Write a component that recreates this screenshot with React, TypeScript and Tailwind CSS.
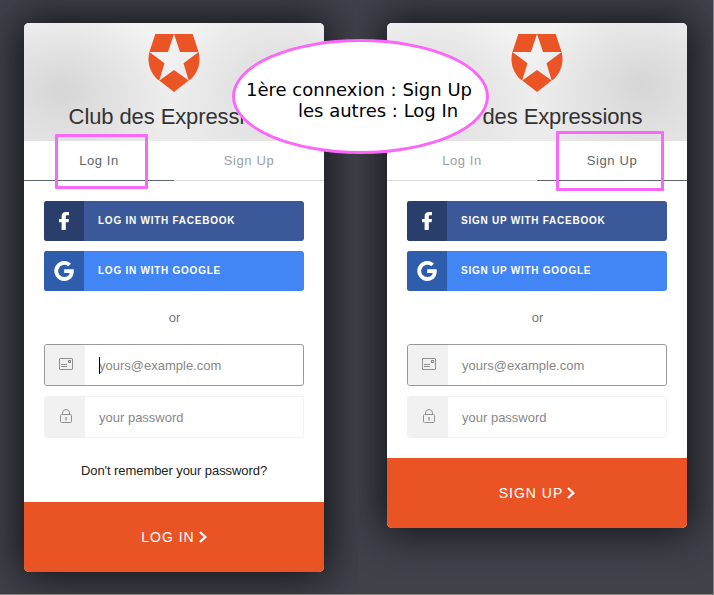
import React from "react";

function BrandLogo() {
  return (
    <svg width="52" height="58" viewBox="0 0 52 58" fill="#eb5424" className="block">
      <path d="M7.300 0H26L20 18H1.400z" />
      <path d="M44.700 0H26L32 18H50.600z" />
      <path d="M1.400 18L16.500 29.200 11.300 46.600C4.500 42-2 31 1.400 18z" />
      <path d="M50.600 18L35.500 29.200 40.700 46.600C47.500 42 54 31 50.600 18z" />
      <path d="M26 36L40.700 46.600 26 58 11.300 46.600z" />
    </svg>
  );
}

function FacebookIcon() {
  return (
    <svg width="10" height="18" viewBox="0 0 10 18" fill="#fff" className="block">
      <path d="M2.600 18V10.200H0V6.900h2.600V4.400C2.600 1.500 4.300 0 7.200 0H10v3.300H8.400C7.100 3.300 6.800 3.800 6.800 4.700v2.200H10l-.4 3.300H6.800V18z" />
    </svg>
  );
}

function GoogleIcon() {
  return (
    <svg width="20" height="20" viewBox="0 0 20 20" fill="#fff" className="block">
      <path d="M10.200 8.200v3.700h5.500c-.4 2.300-2.300 4.200-5.500 4.200A6.100 6.100 0 1 1 14.200 5.300L17 2.600A10 10 0 1 0 10.200 20C16 20 19.800 15.900 19.800 10.100c0-.7-.1-1.300-.2-1.900z" />
    </svg>
  );
}

function MailIcon() {
  return (
    <svg width="14" height="12" viewBox="0 0 14 12" fill="none" stroke="#909090" className="block">
      <rect x=".5" y=".5" width="13" height="11" rx=".5" />
      <path d="M2 6.500h6M2 8.500h6" />
      <rect x="9.500" y="2.500" width="2" height="2" />
    </svg>
  );
}

function LockIcon() {
  return (
    <svg width="12" height="14" viewBox="0 0 12 14" fill="none" stroke="#909090" className="block">
      <rect x=".5" y="5.500" width="11" height="8" rx="1" />
      <path d="M2.500 5.500V4a3.500 3.500 0 0 1 7 0v1.500" />
      <path d="M6 8v3.500" strokeWidth="1.300" />
    </svg>
  );
}

function Tab({ label, active }: { label: string; active: boolean }) {
  return (
    <div
      className={
        "h-10 flex-1 border-b text-center text-[13px] leading-[39px] tracking-[0.6px] " +
        (active ? "border-[#5c666f] text-[#5c666f]" : "border-[#d9dbdd] text-[#9b9fa4]")
      }
    >
      {label}
    </div>
  );
}

function SocialButton({
  label,
  icon,
  iconBg,
  bg,
}: {
  label: string;
  icon: React.ReactNode;
  iconBg: string;
  bg: string;
}) {
  return (
    <div className={"flex h-10 overflow-hidden rounded-[3px] " + bg}>
      <div className={"flex w-10 items-center justify-center " + iconBg}>{icon}</div>
      <div className="pl-[14px] text-[10px] leading-[39px] font-bold tracking-[0.75px] whitespace-nowrap text-white">
        {label}
      </div>
    </div>
  );
}

function Field({
  text,
  icon,
  focused,
  caret,
}: {
  text: string;
  icon: React.ReactNode;
  focused?: boolean;
  caret?: boolean;
}) {
  return (
    <div
      className={
        "flex h-[42px] overflow-hidden rounded-[3px] border " +
        (focused ? "border-[#999]" : "border-[#f1f1f1]")
      }
    >
      <div className="flex w-10 items-center justify-center bg-[#f1f1f1] pb-0.5 pl-0.5">{icon}</div>
      <div className="relative pl-[14px] text-[13px] leading-[41px] text-[#888]">
        {caret && <span className="absolute top-3 left-[14px] h-[17px] w-px bg-black" />}
        {text}
      </div>
    </div>
  );
}

function LockCard({ mode }: { mode: "login" | "signup" }) {
  const login = mode === "login";
  const verb = login ? "LOG IN" : "SIGN UP";
  return (
    <section className="w-[300px] overflow-hidden rounded-[5px] bg-white shadow-[0_0_40px_4px_#111118]">
      <header
        className={
          "flex h-[118px] flex-col items-center pt-[11px] " +
          (login
            ? "bg-[radial-gradient(ellipse_110px_90px_at_38px_68px,#d6d6d6,transparent),radial-gradient(ellipse_110px_100px_at_255px_62px,#dbdbdb,transparent),linear-gradient(#f3f3f3,#ebebeb)]"
            : "bg-[radial-gradient(ellipse_110px_90px_at_38px_68px,#dbdbdb,transparent),radial-gradient(ellipse_110px_100px_at_255px_62px,#d6d6d6,transparent),linear-gradient(#f3f3f3,#ebebeb)]")
        }
      >
        <BrandLogo />
        <h1 className="mt-3 text-[22px] leading-[26px] tracking-[-0.1px] whitespace-nowrap text-[#333]">
          Club des Expressions
        </h1>
      </header>
      <nav className="flex">
        <Tab label="Log In" active={login} />
        <Tab label="Sign Up" active={!login} />
      </nav>
      <div className="flex flex-col px-5 pt-5">
        <div className="flex flex-col gap-[10px]">
          <SocialButton
            label={verb + " WITH FACEBOOK"}
            icon={<FacebookIcon />}
            bg="bg-[#3b5998]"
            iconBg="bg-[#293e6a]"
          />
          <SocialButton
            label={verb + " WITH GOOGLE"}
            icon={<GoogleIcon />}
            bg="bg-[#4285f4]"
            iconBg="bg-[#2e5dab]"
          />
        </div>
        <p className="h-[53px] pl-px text-center text-[13px] leading-[53px] text-[#777]">or</p>
        <div className="flex flex-col gap-[10px]">
          <Field text="yours@example.com" icon={<MailIcon />} focused caret={login} />
          <Field text="your password" icon={<LockIcon />} />
        </div>
        {login ? (
          <p className="h-16 text-center text-[13px] leading-[65px] tracking-[-0.07px] text-[#222]">
            Don't remember your password?
          </p>
        ) : (
          <div className="h-5" />
        )}
      </div>
      <div className="flex h-[70px] items-center justify-center gap-1 bg-[#ea5323] pb-px text-white">
        <span className="text-[14px] leading-5 tracking-[1px]">{verb}</span>
        <svg width="8" height="12" viewBox="0 0 8 12" fill="none" stroke="#fff" strokeWidth="2.400">
          <path d="M1 1L6.300 6L1 11" />
        </svg>
      </div>
    </section>
  );
}

export default function App() {
  return (
    <main className="relative h-[595px] w-[714px] overflow-hidden border-r border-b border-[#85858a] bg-[#41414a] font-['Liberation_Sans',Arial,sans-serif]">
      <div className="flex h-full">
        <div className="w-[358px] overflow-hidden pt-[23px] pl-6">
          <LockCard mode="login" />
        </div>
        <div className="flex-1 overflow-hidden pt-[23px] pl-[29px]">
          <LockCard mode="signup" />
        </div>
      </div>
      <div className="absolute top-[134px] left-[55px] h-[55px] w-[93px] rounded-[1px] border-[3px] border-[#fb66fb]" />
      <div className="absolute top-[131px] left-[556px] h-[60px] w-[108px] rounded-[1px] border-[3px] border-[#fb66fb]" />
      <div className="absolute top-[39px] left-[232px] h-[115px] w-[257px] rounded-[50%] border-[3px] border-[#fb66fb] bg-white">
        <div className="mt-[37px] ml-[11px] w-[226px] font-['DejaVu_Sans',sans-serif] text-[18px] leading-[21px] whitespace-nowrap text-black">
          <p>1ère connexion : Sign Up</p>
          <p className="pl-[52px]">les autres : Log In</p>
        </div>
      </div>
    </main>
  );
}
